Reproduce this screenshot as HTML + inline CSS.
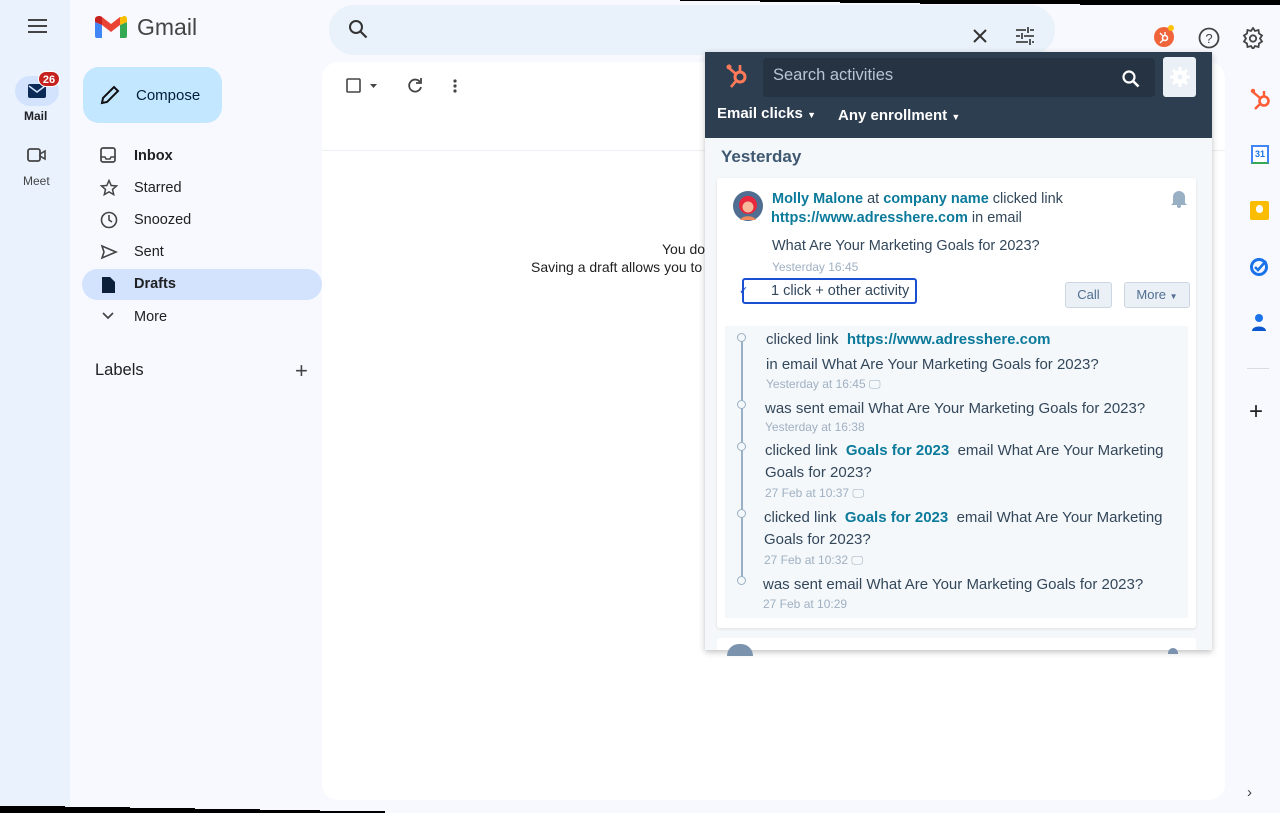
<!DOCTYPE html>
<html><head><meta charset="utf-8"><style>
*{margin:0;padding:0;box-sizing:border-box}
body{width:1280px;height:813px;overflow:hidden;position:relative;background:#f7f9fe;font-family:"Liberation Sans",sans-serif;color:#1f1f1f}
.abs{position:absolute}
.rail{left:0;top:0;width:70px;height:813px;background:#e9f2fd}
.nav{font-size:14.5px;color:#202124}
.nav div.it{position:absolute;left:82px;width:240px;height:31px;line-height:35px;padding-left:52px}
.nav svg{position:absolute;left:18px;top:8px}
.hs{font-family:"Liberation Sans",sans-serif}
.link{color:#0b7a9b;font-weight:bold}
.meta{color:#9fb0c2;font-size:12px}
.tl{position:absolute;font-size:15px;color:#33475b;white-space:nowrap}
</style></head><body>
<div class="abs rail"></div>
<svg class="abs" style="left:27px;top:18px" width="22" height="16"><path d="M1 2h19M1 8h19M1 14h19" stroke="#444" stroke-width="2"/></svg>
<div class="abs" style="left:15px;top:76px;width:44px;height:30px;border-radius:15px;background:#d3e3fd"></div>
<svg class="abs" style="left:28px;top:84px" width="18" height="14"><rect x="0" y="0" width="18" height="14" rx="2" fill="#0b2a55"/><path d="M1 2l8 6 8-6" stroke="#d3e3fd" stroke-width="1.5" fill="none"/></svg>
<div class="abs" style="left:38px;top:71px;width:22px;height:16px;border-radius:8px;background:#c5221f;color:#fff;font-size:11px;font-weight:bold;text-align:center;line-height:16px;border:1px solid #fff">26</div>
<div class="abs" style="left:24px;top:109px;font-size:12px;font-weight:bold;color:#202124">Mail</div>
<svg class="abs" style="left:27px;top:147px" width="20" height="16"><rect x="1" y="2" width="12" height="12" rx="2" fill="none" stroke="#444" stroke-width="1.8"/><path d="M13 7l5-3v8l-5-3z" fill="none" stroke="#444" stroke-width="1.6"/></svg>
<div class="abs" style="left:23px;top:174px;font-size:12px;color:#444">Meet</div>
<svg class="abs" style="left:95px;top:16px" width="32" height="22" viewBox="0 0 32 22"><path d="M0 6v14a2 2 0 0 0 2 2h5V9z" fill="#4285f4"/><path d="M25 9v13h5a2 2 0 0 0 2-2V6z" fill="#34a853"/><path d="M25 1v8l7-3V3c0-3-3-4-5-2z" fill="#fbbc04"/><path d="M7 9V1l9 7 9-7v8l-9 7z" fill="#ea4335"/><path d="M0 3v3l7 3V1C5-1 0 0 0 3z" fill="#c5221f"/></svg>
<div class="abs" style="left:137px;top:14px;font-size:23px;color:#444">Gmail</div>
<div class="abs" style="left:83px;top:67px;width:139px;height:56px;border-radius:16px;background:#c2e7ff"></div>
<svg class="abs" style="left:100px;top:85px" width="20" height="20"><path d="M2 18l1-5L14 2l4 4L7 17z" fill="none" stroke="#111" stroke-width="2"/></svg>
<div class="abs" style="left:136px;top:87px;font-size:15px;color:#001d35">Compose</div>
<div class="nav">
<div class="it" style="top:139px;font-weight:bold"><svg width="16" height="16"><rect x="1" y="1" width="14" height="14" rx="2" fill="none" stroke="#444" stroke-width="1.7"/><path d="M1 10h4l1 2h4l1-2h4" fill="none" stroke="#444" stroke-width="1.5"/></svg>Inbox</div>
<div class="it" style="top:171px"><svg width="18" height="18"><path d="M9 1.5l2.2 5 5.3.4-4 3.5 1.2 5.2L9 12.9 4.3 15.6l1.2-5.2-4-3.5 5.3-.4z" fill="none" stroke="#444" stroke-width="1.5"/></svg>Starred</div>
<div class="it" style="top:203px"><svg width="18" height="18"><circle cx="9" cy="9" r="7.5" fill="none" stroke="#444" stroke-width="1.6"/><path d="M9 4v5l3 2" fill="none" stroke="#444" stroke-width="1.6"/></svg>Snoozed</div>
<div class="it" style="top:235px"><svg width="18" height="18"><path d="M2 3l14 6-14 6 2-6z" fill="none" stroke="#444" stroke-width="1.6"/></svg>Sent</div>
<div class="it" style="top:269px;background:#d3e3fd;border-radius:16px;font-weight:bold;line-height:31px"><svg width="16" height="18" style="top:7px"><path d="M2 1h8l5 5v11H2z" fill="#0b1f3a"/></svg>Drafts</div>
<div class="it" style="top:300px"><svg width="16" height="16"><path d="M3 5l5 5 5-5" fill="none" stroke="#444" stroke-width="1.7"/></svg>More</div>
</div>
<div class="abs" style="left:95px;top:361px;font-size:16.5px;color:#202124">Labels</div>
<div class="abs" style="left:295px;top:358px;font-size:22px;color:#444">+</div>
<div class="abs" style="left:329px;top:5px;width:726px;height:50px;border-radius:25px;background:#e9f1fb"></div>
<svg class="abs" style="left:348px;top:19px" width="20" height="20"><circle cx="8" cy="8" r="6" fill="none" stroke="#333" stroke-width="2"/><path d="M12.5 12.5l6 6" stroke="#333" stroke-width="2.2"/></svg>
<svg class="abs" style="left:972px;top:28px" width="16" height="16"><path d="M2 2l12 12M14 2L2 14" stroke="#333" stroke-width="2"/></svg>
<svg class="abs" style="left:1015px;top:26px" width="20" height="20"><path d="M1 4h10M15 4h4M1 10h4M9 10h10M1 16h12M17 16h2M13 1v6M7 7v6M15 13v6" stroke="#444" stroke-width="1.8"/></svg>
<div class="abs" style="left:1154px;top:27px;width:20px;height:20px;border-radius:50%;background:#f0643c"></div>
<svg class="abs" style="left:1157px;top:30px" width="14" height="14"><circle cx="8" cy="8" r="2.5" fill="none" stroke="#fff" stroke-width="1.6"/><path d="M6 6L3 3M8 5.5V2M6 10l-3 3" stroke="#fff" stroke-width="1.4"/></svg>
<div class="abs" style="left:1168px;top:25px;width:6px;height:6px;border-radius:50%;background:#ffc107"></div>
<svg class="abs" style="left:1198px;top:27px" width="22" height="22"><circle cx="11" cy="11" r="9.5" fill="none" stroke="#444" stroke-width="1.8"/><text x="11" y="16" font-size="13" text-anchor="middle" fill="#444" font-family="Liberation Sans">?</text></svg>
<svg class="abs" style="left:1242px;top:27px" width="22" height="22" viewBox="0 0 22 22"><path d="M11 1l2 3 3.5-1 .5 3.5 3 2-2 3 2 3-3 2-.5 3.5L13 19l-2 3-2-3-3.5 1-.5-3.5-3-2 2-3-2-3 3-2 .5-3.5L9 4z" fill="none" stroke="#444" stroke-width="1.8"/><circle cx="11" cy="11.5" r="3.2" fill="none" stroke="#444" stroke-width="1.8"/></svg>
<div class="abs" style="left:322px;top:62px;width:903px;height:738px;border-radius:16px;background:#fff"></div>
<svg class="abs" style="left:346px;top:78px" width="40" height="16"><rect x="1" y="1" width="13" height="13" rx="1" fill="none" stroke="#444" stroke-width="1.6"/><path d="M24 6h7l-3.5 4z" fill="#444"/></svg>
<svg class="abs" style="left:406px;top:77px" width="18" height="18"><path d="M14 5A6 6 0 1 0 15 10" fill="none" stroke="#444" stroke-width="1.8"/><path d="M15 1v5h-5" fill="none" stroke="#444" stroke-width="1.8"/></svg>
<svg class="abs" style="left:452px;top:79px" width="6" height="16"><circle cx="3" cy="2" r="1.6" fill="#444"/><circle cx="3" cy="7" r="1.6" fill="#444"/><circle cx="3" cy="12" r="1.6" fill="#444"/></svg>
<div class="abs" style="left:322px;top:150px;width:903px;height:1px;background:#eceff3"></div>
<div class="abs" style="left:662px;top:241px;font-size:14px">You dor</div>
<div class="abs" style="left:531px;top:259px;font-size:14px">Saving a draft allows you to</div>
<svg class="abs" style="left:1250px;top:87px" width="22" height="24"><circle cx="14" cy="14" r="4.5" fill="none" stroke="#ff5c35" stroke-width="2.6"/><path d="M10 11L3 5M14 9V4M10 17l-5 5" stroke="#ff5c35" stroke-width="2.4"/><circle cx="3" cy="4" r="2.2" fill="#ff5c35"/></svg>
<div class="abs" style="left:1251px;top:145px;width:18px;height:19px;background:#fff;border:2px solid #4285f4;border-bottom-color:#34a853;font-size:9px;color:#1a73e8;text-align:center;line-height:15px;font-weight:bold">31</div>
<div class="abs" style="left:1250px;top:201px;width:19px;height:19px;border-radius:2px;background:#fbbc04"></div>
<div class="abs" style="left:1256px;top:205px;width:7px;height:8px;border-radius:4px;background:#fff"></div>
<svg class="abs" style="left:1249px;top:257px" width="22" height="20"><circle cx="10" cy="10" r="7.5" fill="none" stroke="#1a73e8" stroke-width="3"/><path d="M6 10l3 3 8-9" fill="none" stroke="#1a73e8" stroke-width="2.6"/></svg>
<svg class="abs" style="left:1250px;top:313px" width="18" height="20"><circle cx="9" cy="5" r="4" fill="#1a73e8"/><path d="M2 18c0-6 14-6 14 0z" fill="#0b57d0"/></svg>
<div class="abs" style="left:1247px;top:368px;width:22px;height:1px;background:#dadce0"></div>
<div class="abs" style="left:1249px;top:398px;font-size:24px;color:#222">+</div>
<div class="abs" style="left:1247px;top:784px;font-size:15px;color:#444">›</div>
<div class="abs hs" style="left:705px;top:52px;width:507px;height:598px;background:#f5f8fa;box-shadow:0 2px 6px rgba(0,0,0,.25)">
  <div class="abs" style="left:0;top:0;width:507px;height:86px;background:#2d3e50"></div>
  <svg class="abs" style="left:20px;top:8px" width="26" height="30"><circle cx="15" cy="17" r="5" fill="none" stroke="#ff7a59" stroke-width="3"/><path d="M11 14L4 8M15 12V5M11 21l-5 6" stroke="#ff7a59" stroke-width="2.6"/><circle cx="4" cy="7" r="2.5" fill="#ff7a59"/></svg>
  <div class="abs" style="left:58px;top:6px;width:392px;height:39px;background:#253342;border-radius:4px"></div>
  <div class="abs" style="left:68px;top:14px;font-size:16.5px;color:#b8c6d4">Search activities</div>
  <svg class="abs" style="left:417px;top:18px" width="18" height="18"><circle cx="7" cy="7" r="5.5" fill="none" stroke="#fff" stroke-width="2.2"/><path d="M11 11l5.5 5.5" stroke="#fff" stroke-width="2.6"/></svg>
  <div class="abs" style="left:458px;top:5px;width:33px;height:40px;background:#eaf0f6;border-radius:3px"></div>
  <svg class="abs" style="left:464px;top:14px" width="22" height="22" viewBox="0 0 22 22"><circle cx="11" cy="11" r="7" fill="#fff"/><circle cx="11" cy="11" r="2.5" fill="#eaf0f6"/><path d="M11 1v4M11 17v4M1 11h4M17 11h4M4 4l3 3M15 15l3 3M4 18l3-3M15 7l3-3" stroke="#fff" stroke-width="3"/></svg>
  <div class="abs" style="left:12px;top:53px;font-size:15px;font-weight:bold;color:#fff">Email clicks <span style="font-size:9px">▼</span></div>
  <div class="abs" style="left:133px;top:55px;font-size:15px;font-weight:bold;color:#fff">Any enrollment <span style="font-size:9px">▼</span></div>
  <div class="abs" style="left:16px;top:95px;font-size:17px;font-weight:bold;color:#3f5871">Yesterday</div>
  <div class="abs" style="left:12px;top:126px;width:479px;height:450px;background:#fff;border-radius:3px;box-shadow:0 1px 3px rgba(0,0,0,.1)">
    <svg class="abs" style="left:15px;top:12px" width="32" height="32"><circle cx="16" cy="16" r="15" fill="#506e91"/><circle cx="16" cy="15" r="9" fill="#e8263c"/><circle cx="16" cy="17" r="5.5" fill="#f6b79a"/><path d="M8 30c2-5 14-5 16 0" fill="#f08a5d"/></svg>
    <div class="abs" style="left:55px;top:13px;font-size:14.5px;color:#33475b;white-space:nowrap"><span class="link">Molly Malone</span> at <span class="link">company name</span> clicked link</div>
    <div class="abs" style="left:54px;top:32px;font-size:14.5px;color:#33475b;white-space:nowrap"><span class="link">https://www.adresshere.com</span> in email</div>
    <svg class="abs" style="left:453px;top:10px" width="18" height="20"><path d="M3 15V9a6 6 0 0 1 12 0v6l2 2H1z" fill="#99afc4"/><circle cx="9" cy="18" r="2" fill="#99afc4"/></svg>
    <div class="abs" style="left:55px;top:60px;font-size:14.5px;color:#33475b">What Are Your Marketing Goals for 2023?</div>
    <div class="abs meta" style="left:55px;top:82px">Yesterday 16:45</div>
    <div class="abs" style="left:25px;top:100px;width:175px;height:26px;border:2px solid #1b4fd1;border-radius:3px"></div>
    <div class="abs" style="left:22px;top:106px;font-size:11px;color:#1b4fd1">✓</div>
    <div class="abs" style="left:54px;top:105px;font-size:14.5px;color:#33475b">1 click + other activity</div>
    <div class="abs" style="left:348px;top:104px;width:47px;height:26px;border:1px solid #cbd6e2;background:#eaf0f6;border-radius:3px;font-size:13px;color:#506e91;text-align:center;line-height:24px">Call</div>
    <div class="abs" style="left:407px;top:104px;width:66px;height:26px;border:1px solid #cbd6e2;background:#eaf0f6;border-radius:3px;font-size:13px;color:#506e91;text-align:center;line-height:24px">More <span style="font-size:8px">▼</span></div>
    <div class="abs" style="left:8px;top:148px;width:463px;height:292px;background:#f5f8fa"></div>
    <div class="abs" style="left:24px;top:160px;width:1.5px;height:242px;background:#99afc4"></div>
    <div class="abs" style="left:20px;top:155px;width:9px;height:9px;border-radius:50%;border:1.5px solid #99afc4;background:#f5f8fa"></div>
    <div class="abs" style="left:20px;top:222px;width:9px;height:9px;border-radius:50%;border:1.5px solid #99afc4;background:#f5f8fa"></div>
    <div class="abs" style="left:20px;top:264px;width:9px;height:9px;border-radius:50%;border:1.5px solid #99afc4;background:#f5f8fa"></div>
    <div class="abs" style="left:20px;top:331px;width:9px;height:9px;border-radius:50%;border:1.5px solid #99afc4;background:#f5f8fa"></div>
    <div class="abs" style="left:20px;top:398px;width:9px;height:9px;border-radius:50%;border:1.5px solid #99afc4;background:#f5f8fa"></div>
    <div class="tl" style="left:49px;top:153px">clicked link &nbsp;<span class="link">https://www.adresshere.com</span></div>
    <div class="tl" style="left:49px;top:178px">in email What Are Your Marketing Goals for 2023?</div>
    <div class="abs meta" style="left:49px;top:199px">Yesterday at 16:45 🖵</div>
    <div class="tl" style="left:48px;top:222px">was sent email What Are Your Marketing Goals for 2023?</div>
    <div class="abs meta" style="left:48px;top:242px">Yesterday at 16:38</div>
    <div class="tl" style="left:48px;top:264px">clicked link &nbsp;<span class="link">Goals for 2023</span> &nbsp;email What Are Your Marketing</div>
    <div class="tl" style="left:48px;top:286px">Goals for 2023?</div>
    <div class="abs meta" style="left:48px;top:308px">27 Feb at 10:37 🖵</div>
    <div class="tl" style="left:47px;top:331px">clicked link &nbsp;<span class="link">Goals for 2023</span> &nbsp;email What Are Your Marketing</div>
    <div class="tl" style="left:47px;top:353px">Goals for 2023?</div>
    <div class="abs meta" style="left:47px;top:375px">27 Feb at 10:32 🖵</div>
    <div class="tl" style="left:46px;top:398px">was sent email What Are Your Marketing Goals for 2023?</div>
    <div class="abs meta" style="left:46px;top:419px">27 Feb at 10:29</div>
  </div>
  <div class="abs" style="left:12px;top:586px;width:479px;height:12px;background:#fff;border-radius:3px 3px 0 0"></div>
  <div class="abs" style="left:22px;top:592px;width:26px;height:12px;border-radius:13px 13px 0 0;background:#7b93ad"></div>
  <div class="abs" style="left:463px;top:596px;width:10px;height:6px;border-radius:5px 5px 0 0;background:#7b93ad"></div>
</div>
<svg class="abs" style="left:0;top:0" width="1280" height="813"><path d="M0 806L65 806 65 807 130 807 130 808 195 808 195 809 260 809 260 810 320 810 320 811 385 811 385 813 0 813z" fill="#000"/><path d="M680 0H1280V5H1080V4H920V3H840V2H760V1H680z" fill="#000"/></svg>
</body></html>
